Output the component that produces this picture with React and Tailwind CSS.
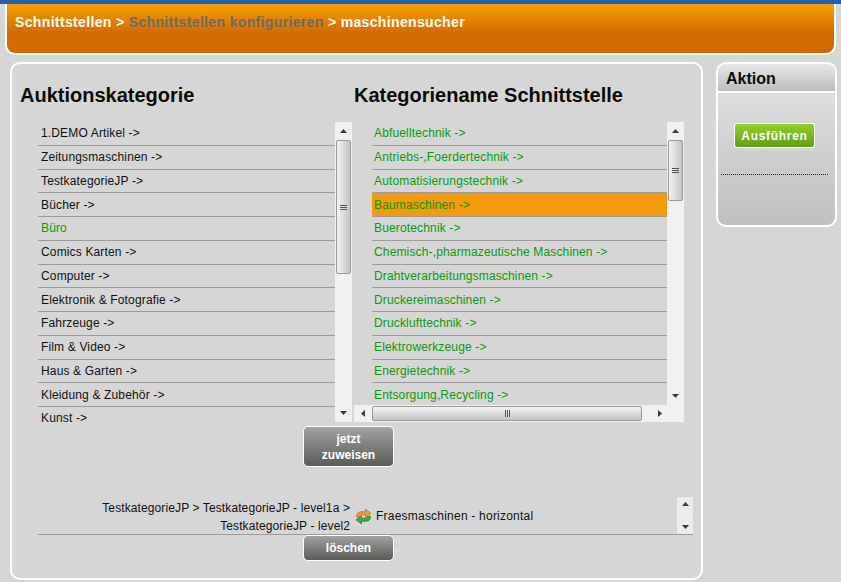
const left = ["1.DEMO Artikel ->","Zeitungsmaschinen ->","TestkategorieJP ->","Bücher ->","Büro","Comics Karten ->","Computer ->","Elektronik & Fotografie ->","Fahrzeuge ->","Film & Video ->","Haus & Garten ->","Kleidung & Zubehör ->","Kunst ->"];
const right = ["Abfuelltechnik ->","Antriebs-,Foerdertechnik ->","Automatisierungstechnik ->","Baumaschinen ->","Buerotechnik ->","Chemisch-,pharmazeutische Maschinen ->","Drahtverarbeitungsmaschinen ->","Druckereimaschinen ->","Drucklufttechnik ->","Elektrowerkzeuge ->","Energietechnik ->","Entsorgung,Recycling ->"];

function Tri({ dir, className = "" }) {
  const pts = { up: "0,4 7,4 3.5,0", down: "0,0 7,0 3.5,4", left: "4,0 4,7 0,3.5", right: "0,0 0,7 4,3.5" }[dir];
  const horizontal = dir === "left" || dir === "right";
  return (
    <svg width={horizontal ? 4 : 7} height={horizontal ? 7 : 4} viewBox={horizontal ? "0 0 4 7" : "0 0 7 4"} className={className}>
      <polygon points={pts} fill="#3a3a3a" />
    </svg>
  );
}

function Grip({ vertical }) {
  return vertical ? (
    <div className="flex flex-col gap-px">
      <div className="w-[7px] h-px bg-[#555]" />
      <div className="w-[7px] h-px bg-[#555]" />
      <div className="w-[7px] h-px bg-[#555]" />
    </div>
  ) : (
    <div className="flex gap-px">
      <div className="h-[7px] w-px bg-[#555]" />
      <div className="h-[7px] w-px bg-[#555]" />
      <div className="h-[7px] w-px bg-[#555]" />
    </div>
  );
}

function VBar({ thumbH }) {
  return (
    <div className="w-[17px] shrink-0 bg-[#f1f1f1] flex flex-col items-center">
      <div className="h-[18px] w-full flex items-center justify-center shrink-0"><Tri dir="up" /></div>
      <div className="w-[15px] rounded-[2px] border border-[#9a9a9a] flex items-center justify-center bg-gradient-to-r from-[#f4f4f4] to-[#c4c4c4] shrink-0" style={{ height: thumbH }}>
        <Grip vertical />
      </div>
      <div className="flex-1" />
      <div className="h-[18px] w-full flex items-center justify-center shrink-0"><Tri dir="down" /></div>
    </div>
  );
}

function Row({ text, green, active, inset }) {
  return (
    <div className={`h-[23.75px] shrink-0 flex items-center border-b border-[#9c9c9c] tracking-[0.15px] ${active ? "bg-[#f39a10]" : ""} ${green ? "text-[#0a9a0a]" : "text-[#111]"} ${inset ? "pl-[2px]" : "pl-[3px]"}`}>
      <span className="whitespace-nowrap">{text}</span>
    </div>
  );
}

function GrayBtn({ className = "", children }) {
  return (
    <div className={`flex items-center justify-center text-center border border-white rounded-[5px] bg-gradient-to-b from-[#a2a2a2] to-[#5b5c56] text-white font-bold text-[12px] leading-[16px] ${className}`}>
      {children}
    </div>
  );
}

export default function App() {
  return (
    <div className="w-[841px] h-[582px] overflow-hidden bg-[#d6d6d6] text-[12px]" style={{ fontFamily: '"Liberation Sans", Arial, sans-serif' }}>
      <div className="h-1 bg-[#1f5fb0]" />
      <div className="h-[51px] mx-[5px] pl-2 pt-[10px] border-x-2 border-b-2 border-white rounded-b-[10px] bg-gradient-to-b from-[#f7a000] to-[#d26a00] from-0% to-60% font-bold text-[14px] leading-4 text-white whitespace-nowrap tracking-[0.35px]">
        Schnittstellen &gt; <span className="text-[#6b6b6b]">Schnittstellen konfigurieren</span> &gt; maschinensucher
      </div>
      <div className="flex items-start mt-[7px] ml-[10px] gap-[13px]">
        <div className="w-[693px] h-[518px] shrink-0 border-2 border-white rounded-[10px] pl-2 pt-[18px]">
          <div className="flex text-[20px] font-bold leading-[26px] text-[#0a0a0a]">
            <div className="w-[334px]">Auktionskategorie</div>
            <div>Kategoriename Schnittstelle</div>
          </div>
          <div className="flex mt-[14px] h-[300px]">
            <div className="ml-[18px] w-[314px] h-[300px] flex overflow-hidden">
              <div className="w-[297px] overflow-hidden">
                {left.map((t, i) => <Row key={t} text={t} green={i === 4} />)}
              </div>
              <VBar thumbH={134} />
            </div>
            <div className="ml-[2px] w-[330px] h-[300px] flex flex-col">
              <div className="flex flex-1 min-h-0">
                <div className="ml-[18px] w-[295px] overflow-hidden flex flex-col">
                  {right.map((t, i) => <Row key={t} text={t} green inset active={i === 3} />)}
                </div>
                <VBar thumbH={61} />
              </div>
              <div className="h-[17px] bg-[#f1f1f1] flex items-center shrink-0">
                <div className="w-[18px] flex justify-center shrink-0"><Tri dir="left" /></div>
                <div className="w-[270px] h-[15px] rounded-[2px] border border-[#9a9a9a] bg-gradient-to-b from-[#f4f4f4] to-[#c4c4c4] flex items-center justify-center"><Grip /></div>
                <div className="w-[36px] flex justify-center"><Tri dir="right" /></div>
              </div>
            </div>
          </div>
          <GrayBtn className="w-[91px] h-[41px] ml-[283px] mt-[4px]">jetzt<br />zuweisen</GrayBtn>
          <div className="ml-[18px] w-[655px] h-[38px] mt-[30px] flex border-b border-[#9c9c9c] text-[#111]">
            <div className="w-[312px] text-right leading-[18px] pt-[2px] shrink-0 tracking-[0.11px]">
              TestkategorieJP &gt; TestkategorieJP - level1a &gt;<br />TestkategorieJP - level2
            </div>
            <svg width="17" height="17" viewBox="0 0 17 17" className="ml-[5px] mt-[11px] shrink-0">
              <path d="M1.5 9 C1.5 5.5 3.5 3.8 6 3.8 H10.5 V1 L16 5.5 L10.5 9.5 V6.8 H6.5 C5 6.8 4.5 7.8 4.5 9 Z" fill="#ef9a3c" stroke="#b8641a" strokeWidth="0.7" />
              <path d="M15.5 8.5 C15.5 12 13.5 13.2 11 13.2 H6.5 V16 L1 11.8 L6.5 7.8 V10.2 H10.5 C12 10.2 12.5 9.5 12.5 8.5 Z" fill="#3fae3f" stroke="#1c7a1c" strokeWidth="0.7" />
            </svg>
            <div className="ml-[4px] self-center leading-4 mt-px flex-1 whitespace-nowrap tracking-[0.22px]">Fraesmaschinen - horizontal</div>
            <div className="w-[16px] bg-[#ececec] flex flex-col items-center justify-between py-[5px] shrink-0">
              <Tri dir="up" />
              <Tri dir="down" />
            </div>
          </div>
          <GrayBtn className="w-[91px] h-[26px] ml-[283px]">löschen</GrayBtn>
        </div>
        <div className="w-[121px] h-[165px] shrink-0 border-2 border-white rounded-[10px] overflow-hidden bg-gradient-to-b from-[#e4e4e4] to-[#c0c0c0]">
          <div className="h-[22px] border-b-2 border-white bg-gradient-to-b from-[#e8e8e8] to-[#bdbdbd] pl-2 pt-[5px] text-[16px] font-bold leading-[20px] text-[#0a0a0a] box-content">Aktion</div>
          <div className="mt-[30px] ml-[16px] w-[81px] h-[25px] border border-white rounded-[3px] bg-gradient-to-b from-[#95d02a] to-[#5f9e18] flex items-center justify-center text-white font-bold text-[12px] tracking-[0.7px]">Ausführen</div>
          <div className="mt-[26px] ml-[3px] w-[107px] border-t border-dotted border-[#222]" />
        </div>
      </div>
    </div>
  );
}
